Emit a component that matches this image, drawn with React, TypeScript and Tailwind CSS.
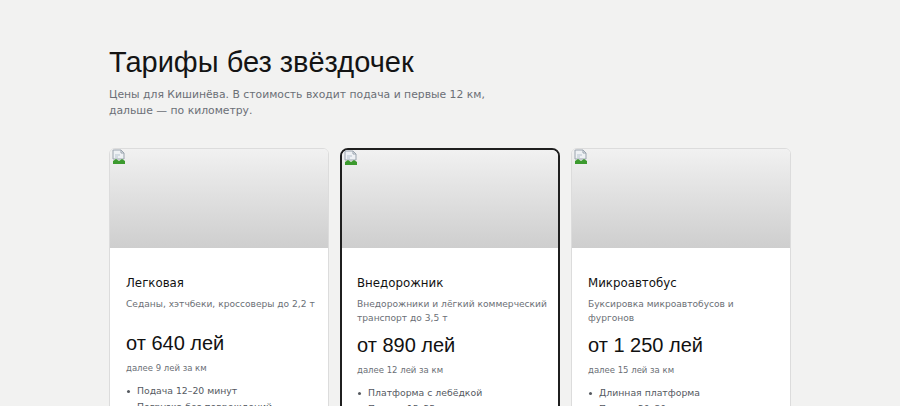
import React from "react";

type Tariff = {
  title: string;
  desc: string;
  price: string;
  perKm: string;
  features: string[];
  featured?: boolean;
};

const tariffs: Tariff[] = [
  {
    title: "Легковая",
    desc: "Седаны, хэтчбеки, кроссоверы до 2,2 т",
    price: "от 640 лей",
    perKm: "далее 9 лей за км",
    features: ["Подача 12–20 минут", "Погрузка без повреждений"],
  },
  {
    title: "Внедорожник",
    desc: "Внедорожники и лёгкий коммерческий транспорт до 3,5 т",
    price: "от 890 лей",
    perKm: "далее 12 лей за км",
    features: ["Платформа с лебёдкой", "Подача 15–25 минут"],
    featured: true,
  },
  {
    title: "Микроавтобус",
    desc: "Буксировка микроавтобусов и фургонов",
    price: "от 1 250 лей",
    perKm: "далее 15 лей за км",
    features: ["Длинная платформа", "Подача 20–30 минут"],
  },
];

// значок «картинка не загрузилась»
const BrokenImage = () => (
  <svg width="16" height="16" viewBox="0 0 16 16" className="absolute left-[1px] top-0">
    <path d="M2 1h8l3 3v6H2z" fill="#eef1f4" stroke="#9aa4ae" strokeWidth="1" />
    <path d="M10 1v3h3" fill="none" stroke="#9aa4ae" strokeWidth="1" />
    <path d="M2 12l3-2 3 2 3-2 3 2v3H2z" fill="#3c9a2e" />
    <path d="M4 6h5M4 8h3" stroke="#b7c3cf" strokeWidth="1" />
  </svg>
);

const TariffCard = ({ t }: { t: Tariff }) => (
  <div
    className={
      t.featured
        ? "flex flex-col overflow-hidden rounded-[8px] border-2 border-[#1f1f1f] bg-white"
        : "flex flex-col overflow-hidden rounded-[6px] border border-[#dcdcdc] bg-white"
    }
  >
    <div
      className={
        t.featured
          ? "relative h-[98px] bg-gradient-to-b from-[#f1f1f1] to-[#cecece]"
          : "relative h-[99px] bg-gradient-to-b from-[#f1f1f1] to-[#cecece]"
      }
    >
      <BrokenImage />
    </div>
    <div className={t.featured ? "flex flex-col pl-[15px] pr-[11px] pt-[26px] pb-4" : "flex flex-col pl-4 pr-3 pt-[26px] pb-4"}>
      <div className="text-[11.8px] leading-[18px] text-[#111]">{t.title}</div>
      <div className="mt-[5px] min-h-[26px] text-[9.1px] leading-[14px] text-[#6b6f76]">
        {t.desc}
      </div>
      <div className="mt-[7px] font-['Liberation_Sans',Arial,sans-serif] text-[20px] leading-[26px] text-[#111]">
        {t.price}
      </div>
      <div className="mt-[5px] text-[8.5px] leading-[14px] text-[#6b6f76]">{t.perKm}</div>
      <ul className="mt-[8px] flex flex-col pl-[1px]">
        {t.features.map((f) => (
          <li key={f} className="flex items-center gap-[7px] text-[9.3px] leading-[16px] text-[#55595f]">
            <span className="h-[3px] w-[3px] shrink-0 rounded-full bg-[#55595f]" />
            {f}
          </li>
        ))}
      </ul>
    </div>
  </div>
);

export default function App() {
  return (
    <div className="min-h-screen bg-[#f2f2f1] font-['DejaVu_Sans',sans-serif]">
      <div className="mx-auto w-[682px] pt-[44px] pb-10">
        <h1 className="font-['Liberation_Sans',Arial,sans-serif] text-[29px] leading-[36px] text-[#141414]">
          Тарифы без звёздочек
        </h1>
        <p className="mt-[7px] max-w-[400px] text-[10.8px] leading-[16px] text-[#6b6f76]">
          Цены для Кишинёва. В стоимость входит подача и первые 12 км, дальше — по километру.
        </p>
        <div className="mt-[29px] grid grid-cols-3 gap-[11px]">
          {tariffs.map((t) => (
            <TariffCard key={t.title} t={t} />
          ))}
        </div>
      </div>
    </div>
  );
}
